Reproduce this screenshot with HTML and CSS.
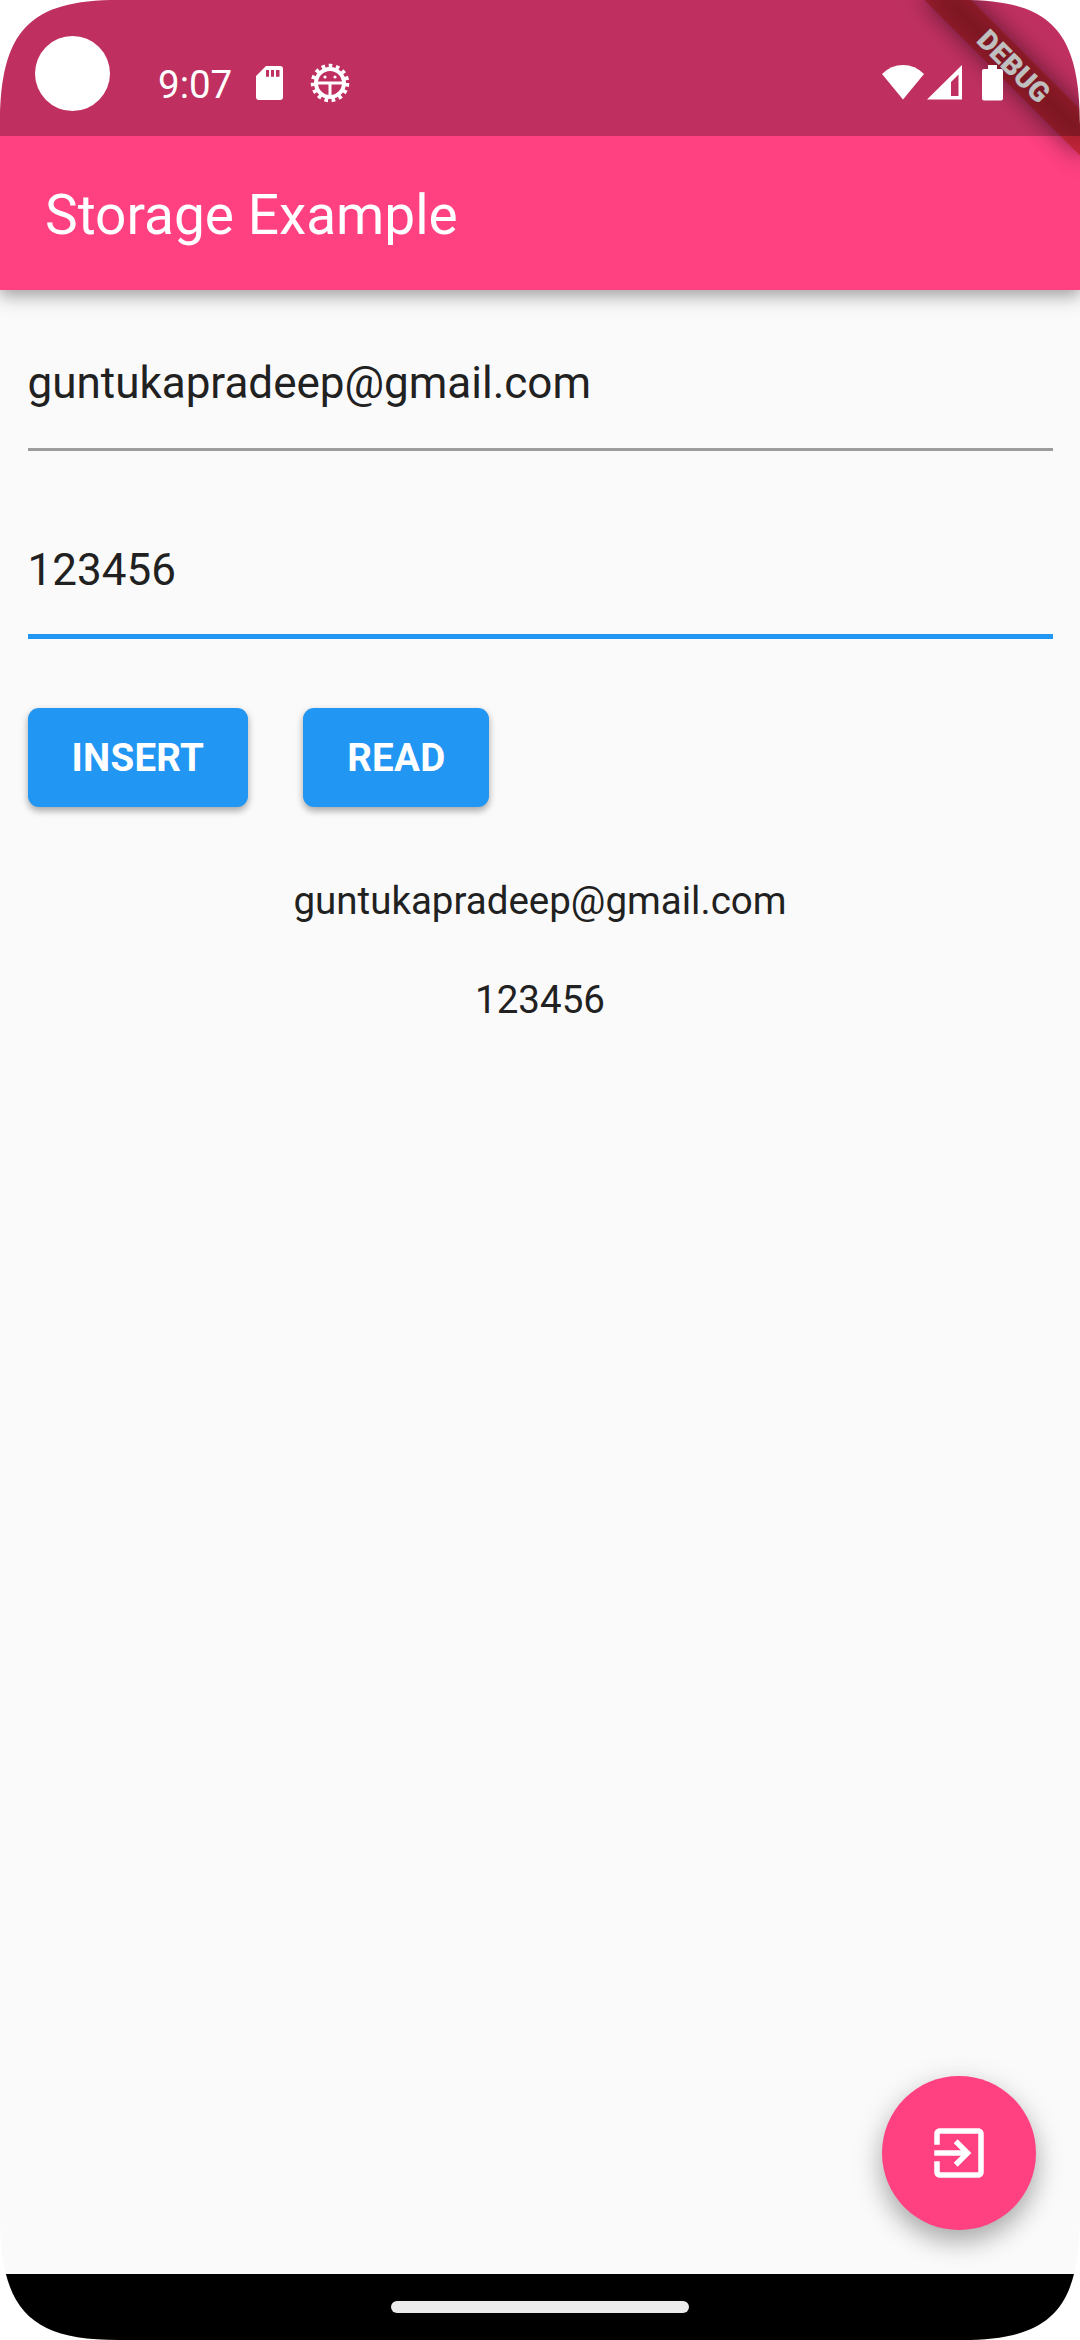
FILE: index.html
```html
<!DOCTYPE html>
<html lang="en">
<head>
<meta charset="utf-8">
<title>Storage Example</title>
<link rel="stylesheet" href="styles.css">
</head>
<body>
<div class="screen">
  <header class="top">
    <svg class="banner" width="240" height="240" viewBox="0 0 240 240">
      <defs><filter id="soft" x="-50%" y="-150%" width="200%" height="400%"><feGaussianBlur stdDeviation="12"/></filter></defs>
      <g transform="translate(240 0) rotate(45)">
        <rect x="-110" y="77" width="220" height="33" fill="#000" fill-opacity=".5" filter="url(#soft)"/>
        <rect x="-110" y="77" width="220" height="33" fill="#b71c1c" fill-opacity=".627"/>
        <text x="0" y="103.5" text-anchor="middle" class="banner-text">DEBUG</text>
      </g>
    </svg>
    <div class="status">
      <span class="camera"></span>
      <span class="time">9:07</span>
      <svg class="sd" width="27" height="34" viewBox="0 0 27 34"><path fill="#fff" fill-rule="evenodd" d="M10 0H24Q27 0 27 3V31Q27 34 24 34H3Q0 34 0 31V10ZM10 4V10.700H13V4ZM15 4V10.700H18V4ZM20 4V10.700H23.500V4Z"/></svg>
      <svg class="bug" width="40" height="40" viewBox="-20 -20 40 40">
        <circle r="14" fill="none" stroke="#fff" stroke-width="4"/>
        <circle r="17" fill="none" stroke="#fff" stroke-width="4.500" stroke-dasharray="3.560 3.560"/>
        <path d="M-13 0H13M0 0V14" stroke="#fff" stroke-width="3"/>
        <circle cx="-5" cy="-6" r="1.600" fill="#fff"/><circle cx="5" cy="-6" r="1.600" fill="#fff"/>
      </svg>
      <svg class="wifi" width="42" height="35" viewBox="0 0 42 35"><path fill="#fff" d="M0 9Q9 0 21 0T42 9L21 34.500Z"/></svg>
      <svg class="signal" width="35" height="35" viewBox="0 0 35 35"><path fill="#fff" fill-rule="evenodd" d="M0 34.500 35 0V34.500ZM24 17V31H31.500V9.500Z"/></svg>
      <svg class="battery" width="21" height="36" viewBox="0 0 21 36"><path fill="#fff" d="M6 0H15V4H19Q21 4 21 6V33.500Q21 35.500 19 35.500H2Q0 35.500 0 33.500V6Q0 4 2 4H6Z"/></svg>
    </div>
    <h1 class="title">Storage Example</h1>
  </header>
  <main class="body">
    <div class="field">guntukapradeep@gmail.com</div>
    <div class="field focused">123456</div>
    <div class="actions"><button class="btn">INSERT</button><button class="btn">READ</button></div>
    <p class="result">guntukapradeep@gmail.com</p>
    <p class="result">123456</p>
    <button class="fab" aria-label="Exit">
      <svg width="66" height="66" viewBox="0 0 24 24"><path fill="#fff" d="M10.090 15.590 11.500 17l5-5-5-5-1.410 1.410L12.670 11H3v2h9.670l-2.580 2.590zM19 3H5c-1.110 0-2 .9-2 2v4h2V5h14v14H5v-4H3v4c0 1.100.89 2 2 2h14c1.100 0 2-.9 2-2V5c0-1.100-.9-2-2-2z"/></svg>
    </button>
  </main>
  <footer class="nav"><span class="handle"></span></footer>
  <svg class="corners" width="1080" height="2340" viewBox="0 0 1080 2340">
    <defs><path id="corner" fill="#fff" d="M0 0H118C30 0 0 30 0 125Z"/></defs>
    <use href="#corner"/>
    <use href="#corner" transform="translate(1080 0) scale(-1 1)"/>
    <use href="#corner" transform="translate(0 2340) scale(1 -1)"/>
    <use href="#corner" transform="translate(1080 2340) scale(-1 -1)"/>
  </svg>
</div>
</body>
</html>
```
FILE: styles.css
```css
* { box-sizing: border-box; }
body { margin: 0; background: #fff; font-family: Roboto, sans-serif; color: #212121; }
.screen { position: relative; width: 1080px; height: 2340px; display: flex; flex-direction: column; overflow: hidden; background: #fafafa; }
.top { position: relative; z-index: 1; height: 290px; background: #ff4081; box-shadow: 0 8px 18px rgba(0,0,0,.22), 0 4px 12px rgba(0,0,0,.16); }
.banner { position: absolute; top: 0; right: 0; }
.banner-text { font: 900 28px Roboto, sans-serif; fill: #fff; }
.status { position: relative; height: 136px; padding-left: 35px; padding-right: 77px; display: flex; align-items: flex-start; background: rgba(0,0,0,.25); }
.camera { width: 75px; height: 75px; margin-top: 36px; border-radius: 50%; background: #fff; }
.time { margin: 62px 0 0 48px; width: 80px; font-size: 38.5px; line-height: 46px; color: #fff; }
.sd { margin: 66px 0 0 18px; }
.bug { margin: 63px 0 0 27px; }
.wifi { margin: 65px 3px 0 auto; }
.signal { margin: 65px 20px 0 0; }
.battery { margin: 65px 0 0; }
.title { margin: 0; padding: 2px 0 0 45px; font-size: 55px; font-weight: 400; line-height: 154px; color: #fff; }
.body { position: relative; flex: 1; padding: 28px 27.5px 0; }
.field { height: 133px; border-bottom: 3px solid #9c9c9c; font-size: 44px; line-height: 130px; }
.focused { height: 134px; margin-top: 54px; border-bottom: 5.5px solid #2196f3; }
.actions { display: flex; gap: 55px; margin-top: 69px; }
.btn { height: 99px; padding: 0 44px; border: 0; border-radius: 11px; background: #2196f3; color: #fff; font: 700 38.5px Roboto, sans-serif; letter-spacing: .25px; box-shadow: 0 4px 6px rgba(0,0,0,.22), 0 3px 10px rgba(0,0,0,.14); }
.result { margin: 0; text-align: center; font-size: 38.5px; line-height: 45px; }
.actions + .result { margin-top: 71px; }
.result + .result { margin-top: 54px; }
.fab { position: absolute; right: 44px; bottom: 44px; width: 154px; height: 154px; padding: 0; border: 0; border-radius: 50%; background: #ff4081; display: grid; place-items: center; box-shadow: 0 12px 22px rgba(0,0,0,.22), 0 8px 34px rgba(0,0,0,.14); }
.nav { height: 66px; background: #000; display: flex; justify-content: center; align-items: center; }
.handle { width: 298px; height: 12px; border-radius: 6px; background: #ebebeb; }
.corners { position: absolute; inset: 0; z-index: 2; pointer-events: none; }
```
